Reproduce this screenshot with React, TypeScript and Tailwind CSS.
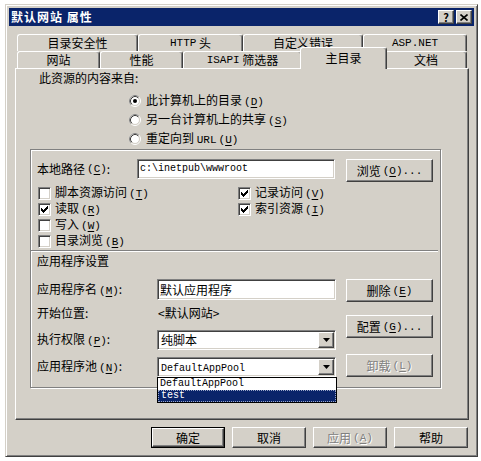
import type { ReactNode } from "react";

const MONO = "font-[family-name:Liberation_Mono,monospace]";
const RAISED =
  "bg-[#d4d0c8] border border-t-white border-l-white border-r-[#404040] border-b-[#404040] shadow-[inset_-1px_-1px_0_#808080]";
const SUNKEN =
  "bg-white border border-t-[#808080] border-l-[#808080] border-r-white border-b-white shadow-[inset_1px_1px_0_#404040,inset_-1px_-1px_0_#d4d0c8]";
const DISABLED = "text-[#808080] [text-shadow:1px_1px_0_#fff]";
const TAB =
  "flex items-center justify-center bg-[#d4d0c8] border-t border-l border-r border-t-white border-l-white border-r-[#404040] shadow-[inset_-1px_0_0_#808080] rounded-tl-[3px] rounded-tr-[3px]";

// hotkey suffix, e.g. (C) with the letter underlined
function Key({ k }: { k: string }) {
  return (
    <span className={`${MONO} text-[11px] ml-[2px]`}>
      (<span className="underline underline-offset-2">{k}</span>)
    </span>
  );
}

function Btn({ children, className = "", disabled }: { children: ReactNode; className?: string; disabled?: boolean }) {
  return (
    <div className={`${RAISED} flex items-center justify-center ${disabled ? DISABLED : "text-black"} ${className}`}>
      {children}
    </div>
  );
}

function Radio({ on, children }: { on?: boolean; children: ReactNode }) {
  return (
    <div className="flex items-center h-[19px]">
      <svg width="12" height="12" viewBox="0 0 12 12">
        <circle cx="6" cy="6" r="5.5" fill="none" stroke="#fff" />
        <path d="M2.11 9.89A5.5 5.5 0 0 1 9.89 2.11" fill="none" stroke="#808080" />
        <circle cx="6" cy="6" r="4.5" fill="#fff" stroke="#d4d0c8" />
        <path d="M2.82 9.18A4.5 4.5 0 0 1 9.18 2.82" fill="none" stroke="#404040" />
        {on && <circle cx="6" cy="6" r="2" fill="#000" />}
      </svg>
      <span className="ml-[5px]">{children}</span>
    </div>
  );
}

function Check({ on, children }: { on?: boolean; children: ReactNode }) {
  return (
    <div className="flex items-center h-[16px]">
      <div className={`${SUNKEN} w-[13px] h-[13px] flex items-center justify-center`}>
        {on && (
          <svg width="7" height="7" viewBox="0 0 7 7" shapeRendering="crispEdges">
            <path d="M0 2h1v1h1v1h1V3h1V2h1V1h1V0h1v3H6v1H5v1H4v1H3v1H2V6H1V5H0z" fill="#000" />
          </svg>
        )}
      </div>
      <span className="ml-[4px]">{children}</span>
    </div>
  );
}

function Combo({ children }: { children: ReactNode }) {
  return (
    <div className={`${SUNKEN} w-[179px] h-[20px] flex items-center pl-[3px] pr-[1px]`}>
      <span className="flex-1">{children}</span>
      <div className={`${RAISED} w-[16px] h-[16px] flex items-center justify-center`}>
        <svg width="7" height="4" viewBox="0 0 7 4">
          <path d="M0 0h7L3.5 4z" fill="#000" />
        </svg>
      </div>
    </div>
  );
}

export default function App() {
  return (
    <div className="w-[481px] h-[461px] bg-white pt-[4px] pl-[5px] font-[family-name:Noto_Sans_CJK_SC,sans-serif] text-[12px] leading-[16px] text-black">
      <div className="w-[473px] h-[453px] bg-[#d4d0c8] p-[3px] border border-t-[#d4d0c8] border-l-[#d4d0c8] border-r-[#404040] border-b-[#404040] shadow-[inset_1px_1px_0_#fff,inset_-1px_-1px_0_#808080]">
        {/* Title bar */}
        <div className="h-[18px] bg-[#0a246a] flex items-center justify-between pl-[2px] pr-[2px]">
          <span className="text-white font-bold tracking-[1px]">默认网站 属性</span>
          <div className="flex gap-[2px]">
            <Btn className="w-[16px] h-[14px] font-bold text-[11px] leading-none">?</Btn>
            <Btn className="w-[16px] h-[14px]">
              <svg width="8" height="7" viewBox="0 0 8 7">
                <path d="M0.5 0.5L7.5 6.5M7.5 0.5L0.5 6.5" stroke="#000" strokeWidth="1.6" />
              </svg>
            </Btn>
          </div>
        </div>

        {/* Tabs */}
        <div className="mt-[8px] ml-[8px]">
          <div className="flex h-[17px]">
            <div className={`${TAB} w-[121px] h-[17px]`}>目录安全性</div>
            <div className={`${TAB} w-[105px] h-[17px]`}><span className={`${MONO} text-[11px]`}>HTTP</span>&nbsp;头</div>
            <div className={`${TAB} w-[120px] h-[17px]`}>自定义错误</div>
            <div className={`${TAB} w-[104px] h-[17px]`}><span className={`${MONO} text-[11px]`}>ASP.NET</span></div>
          </div>
          <div className="flex items-end h-[17px]">
            <div className={`${TAB} w-[83px] h-[17px]`}>网站</div>
            <div className={`${TAB} w-[83px] h-[17px]`}>性能</div>
            <div className={`${TAB} w-[119px] h-[17px]`}><span className={`${MONO} text-[11px]`}>ISAPI</span>&nbsp;筛选器</div>
            <div className={`${TAB} relative z-10 w-[87px] h-[22px] ml-[-2px] mb-[-1px] pb-[1px]`}>主目录</div>
            <div className={`${TAB} w-[82px] h-[17px] ml-[-2px]`}>文档</div>
          </div>
        </div>

        {/* Panel */}
        <div className="ml-[6px] w-[454px] h-[352px] border border-t-white border-l-white border-r-[#404040] border-b-[#404040] shadow-[inset_-1px_-1px_0_#808080]">
          <div className="mt-[1px] pl-[23px] h-[16px]">此资源的内容来自:</div>
          <div className="mt-[5px] ml-[113px]">
            <Radio on>此计算机上的目录<Key k="D" /></Radio>
            <Radio>另一台计算机上的共享<Key k="S" /></Radio>
            <Radio>重定向到 <span className={`${MONO} text-[11px]`}>URL</span><Key k="U" /></Radio>
          </div>

          {/* Group box */}
          <div className="mt-[1px] ml-[14px] w-[411px] h-[239px] border border-[#808080] shadow-[inset_1px_1px_0_#fff,1px_1px_0_#fff]">
            <div className="mt-[9px] flex items-start">
              <div className="w-[106px] h-[20px] pl-[6px] flex items-center">本地路径<Key k="C" />:</div>
              <div className={`${SUNKEN} w-[198px] h-[20px] flex items-center pl-[2px] ${MONO} text-[10px]`}>c:\inetpub\wwwroot</div>
              <Btn className="ml-[11px] w-[87px] h-[23px]">浏览<Key k="O" /><span className={`${MONO} text-[11px]`}>...</span></Btn>
            </div>

            <div className="mt-[3px] pl-[7px] flex">
              <div className="w-[200px]">
                <Check>脚本资源访问<Key k="T" /></Check>
                <Check on>读取<Key k="R" /></Check>
                <Check>写入<Key k="W" /></Check>
                <Check>目录浏览<Key k="B" /></Check>
              </div>
              <div>
                <Check on>记录访问<Key k="V" /></Check>
                <Check on>索引资源<Key k="I" /></Check>
              </div>
            </div>

            <div className="mt-[1px] w-[407px] h-[2px] border-t border-t-[#808080] border-b border-b-white" />
            <div className="mt-[1px] pl-[6px] h-[16px]">应用程序设置</div>

            <div className="flex">
              <div className="w-[305px]">
                <div className="mt-[10px] flex items-center h-[21px]">
                  <div className="w-[126px] pl-[6px]">应用程序名<Key k="M" />:</div>
                  <div className={`${SUNKEN} w-[179px] h-[21px] flex items-center pl-[2px]`}>默认应用程序</div>
                </div>
                <div className="mt-[5px] flex items-center h-[16px]">
                  <div className="w-[126px] pl-[6px]">开始位置:</div>
                  <div className="pl-[1px]">&lt;默认网站&gt;</div>
                </div>
                <div className="mt-[9px] flex items-center h-[20px]">
                  <div className="w-[126px] pl-[6px]">执行权限<Key k="P" />:</div>
                  <Combo>纯脚本</Combo>
                </div>
                <div className="mt-[7px] flex items-center h-[20px]">
                  <div className="w-[126px] pl-[6px]">应用程序池<Key k="N" />:</div>
                  <div className="relative">
                    <Combo><span className={`${MONO} text-[10px]`}>DefaultAppPool</span></Combo>
                    {/* open drop-down list */}
                    <div className={`absolute top-full left-0 z-20 w-[180px] h-[26px] bg-white border border-black ${MONO} text-[10px] leading-[12px]`}>
                      <div className="h-[12px] pl-[2px]">DefaultAppPool</div>
                      <div className="h-[12px] pl-[2px] bg-[#0a246a] text-white border border-dotted border-[#9aa6c8] leading-[10px]">test</div>
                    </div>
                  </div>
                </div>
              </div>
              <div className="ml-[10px]">
                <Btn className="mt-[10px] w-[87px] h-[23px]">删除<Key k="E" /></Btn>
                <Btn className="mt-[13px] w-[87px] h-[23px]">配置<Key k="G" /><span className={`${MONO} text-[11px]`}>...</span></Btn>
                <Btn disabled className="mt-[16px] w-[87px] h-[23px]">卸载<Key k="L" /></Btn>
              </div>
            </div>
          </div>
        </div>

        {/* Dialog buttons */}
        <div className="mt-[7px] pr-[6px] flex justify-end gap-[7px]">
          <div className="w-[74px] h-[21px] border border-black">
            <Btn className="w-full h-full">确定</Btn>
          </div>
          <Btn className="w-[74px] h-[21px]">取消</Btn>
          <Btn disabled className="w-[74px] h-[21px]">应用<Key k="A" /></Btn>
          <Btn className="w-[74px] h-[21px]">帮助</Btn>
        </div>
      </div>
    </div>
  );
}
